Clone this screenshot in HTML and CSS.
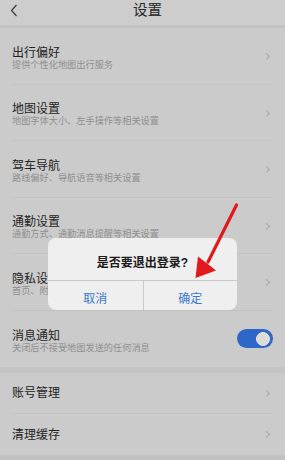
FILE: index.html
```html
<!DOCTYPE html>
<html lang="zh-CN">
<head>
<meta charset="utf-8">
<title>设置</title>
<link rel="stylesheet" href="styles.css">
</head>
<body>
<div class="screen">
  <header class="header">
    <svg class="back" width="8" height="13" viewBox="0 0 8 13"><path d="M6.5 1 L1.5 6.5 L6.5 12" fill="none" stroke="#3a3a3a" stroke-width="1.2"/></svg>
    <h1 class="title">设置</h1>
    <span></span>
  </header>
  <div class="band"></div>
  <ul class="list">
    <li class="item tall"><div class="inner"><div class="text"><div class="t">出行偏好</div><div class="s">提供个性化地图出行服务</div></div><span class="chev"></span></div></li>
    <li class="item tall"><div class="inner"><div class="text"><div class="t">地图设置</div><div class="s">地图字体大小、左手操作等相关设置</div></div><span class="chev"></span></div></li>
    <li class="item tall"><div class="inner"><div class="text"><div class="t">驾车导航</div><div class="s">路线偏好、导航语音等相关设置</div></div><span class="chev"></span></div></li>
    <li class="item tall"><div class="inner"><div class="text"><div class="t">通勤设置</div><div class="s">通勤方式、通勤消息提醒等相关设置</div></div><span class="chev"></span></div></li>
    <li class="item tall"><div class="inner"><div class="text"><div class="t">隐私设置</div><div class="s">首页、附近等隐私相关设置</div></div><span class="chev"></span></div></li>
    <li class="item tall last"><div class="inner"><div class="text"><div class="t">消息通知</div><div class="s">关闭后不接受地图发送的任何消息</div></div><span class="toggle"><span class="knob"></span></span></div></li>
  </ul>
  <div class="band thick"></div>
  <ul class="list">
    <li class="item short"><div class="inner"><div class="t">账号管理</div><span class="chev"></span></div></li>
    <li class="item short last"><div class="inner"><div class="t">清理缓存</div><span class="chev"></span></div></li>
  </ul>
  <div class="band rest"></div>

  <div class="dialog">
    <div class="dlg-title">是否要退出登录?</div>
    <div class="dlg-buttons">
      <span class="btn">取消</span>
      <span class="btn">确定</span>
    </div>
  </div>

  <svg class="arrow" width="285" height="460" viewBox="0 0 285 460">
    <path d="M236.5 205 L208 262" fill="none" stroke="#e1191a" stroke-width="3.2" stroke-linecap="round"/>
    <polygon points="195.5,278 198,256.5 206.5,263 216,270.5" fill="#e1191a"/>
  </svg>
</div>
</body>
</html>
```
FILE: styles.css
```css
* { box-sizing: border-box; }
html, body { margin: 0; padding: 0; }
body {
  width: 285px;
  height: 460px;
  overflow: hidden;
  background: #cbcbcb;
  font-family: "Liberation Sans", "Noto Sans CJK SC", sans-serif;
  color: #232323;
}
.screen { position: relative; width: 285px; height: 460px; }

.header {
  height: 25px;
  display: grid;
  grid-template-columns: 1fr auto 1fr;
  align-items: center;
  padding: 0 0 5px 10px;
  background: #cdcdcd;
}
.back { display: block; }
.title {
  margin: 0;
  font-size: 14.5px;
  font-weight: normal;
  line-height: 18px;
  color: #262626;
}

.band { height: 3px; background: #c2c2c2; }
.band.thick { height: 6px; background: #c3c3c3; }
.band.rest { height: 10px; background: #c2c2c2; }

.list { list-style: none; margin: 0; padding: 0; background: #cbcbcb; }
.item { padding: 0 13px; }
.inner {
  display: flex;
  align-items: center;
  justify-content: space-between;
  border-bottom: 1px solid #c2c2c2;
}
.item.last .inner { border-bottom: none; }
.item.tall .inner { height: 56.5px; padding-top: 5px; }
.item.short .inner { height: 41px; }
.item.short .inner .t { margin-left: -1px; }

.text { margin-left: -1px; }
.t { font-size: 12px; line-height: 14px; color: #232323; }
.s { font-size: 9.2px; line-height: 11px; color: #8f8f8f; }

.chev {
  width: 5px;
  height: 5px;
  border-top: 1px solid #a9a9a9;
  border-right: 1px solid #a9a9a9;
  transform: rotate(45deg);
  margin-right: 3px;
}
.item.tall .chev { margin-top: -3px; }

.toggle {
  width: 36px;
  height: 19px;
  border-radius: 10px;
  background: #2f67c9;
  display: flex;
  align-items: center;
  justify-content: flex-end;
  padding-right: 3px;
  margin-top: -5px;
  margin-right: -1px;
}
.knob {
  width: 14px;
  height: 14px;
  border-radius: 50%;
  background: #dcdcdc;
  border: 1.5px solid #eaeaea;
}

.dialog {
  position: absolute;
  left: 48px;
  top: 238px;
  width: 189px;
  height: 72px;
  border-radius: 8px;
  background: #efefef;
  display: flex;
  flex-direction: column;
}
.dlg-title {
  height: 42px;
  padding-top: 4px;
  display: flex;
  align-items: center;
  justify-content: center;
  font-size: 12px;
  font-weight: bold;
  color: #1b1b1b;
}
.dlg-buttons {
  flex: 1;
  display: grid;
  grid-template-columns: 1fr 1fr;
  border-top: 1px solid #c9c9c9;
}
.btn {
  display: flex;
  align-items: center;
  justify-content: center;
  padding-top: 3px;
  font-size: 12px;
  color: #3b77d3;
}
.btn + .btn { border-left: 1px solid #c9c9c9; }

.arrow { position: absolute; left: 0; top: 0; pointer-events: none; }
```
